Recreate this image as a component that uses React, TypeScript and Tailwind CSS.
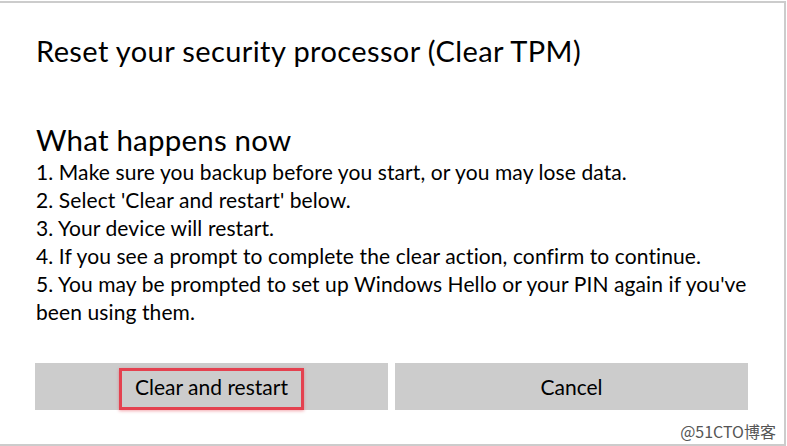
export default function App() {
  const steps = [
    '1. Make sure you backup before you start, or you may lose data.',
    "2. Select 'Clear and restart' below.",
    '3. Your device will restart.',
    '4. If you see a prompt to complete the clear action, confirm to continue.',
    "5. You may be prompted to set up Windows Hello or your PIN again if you've been using them.",
  ];

  return (
    <div className="w-[787px] h-[446px] bg-white pt-px overflow-hidden">
      <div
        className="relative w-[786px] h-[445px] border-t-2 border-r-2 border-b-2 border-[#cccccc] text-black"
        style={{ fontFamily: 'Lato, "Noto Sans", sans-serif' }}
      >
        {/* Title */}
        <h1 className="pl-9 pt-[30px] text-[29px] leading-[36px] tracking-[0.4px] font-normal">
          Reset your security processor (Clear TPM)
        </h1>

        {/* What happens now */}
        <div className="pl-9 pr-6 mt-[52px]">
          <h2 className="text-[29.5px] leading-[37px] tracking-[0.2px] font-normal">What happens now</h2>
          <div className="text-[21px] leading-[28px] tracking-[0.1px]">
            {steps.map((s) => (
              <p key={s}>{s}</p>
            ))}
          </div>
        </div>

        {/* Buttons */}
        <div className="flex gap-[7px] pl-[35px] mt-[37px]">
          <div className="w-[353px] h-[47px] bg-[#cccccc] flex items-center justify-center">
            <div className="w-[185px] h-[42px] mt-[5px] pb-[5px] border-[3px] border-[#e4414f] shadow-[0_1px_3px_rgba(228,65,79,0.45)] flex items-center justify-center text-[21px]">
              Clear and restart
            </div>
          </div>
          <div className="w-[353px] h-[47px] bg-[#cccccc] flex items-center justify-center text-[21px]">
            Cancel
          </div>
        </div>

        {/* Watermark */}
        <span
          className="absolute right-[8px] bottom-[1px] text-[16px] text-[#555555]"
          style={{ fontFamily: '"Noto Sans CJK SC", sans-serif' }}
        >
          @51CTO博客
        </span>
      </div>
    </div>
  );
}
